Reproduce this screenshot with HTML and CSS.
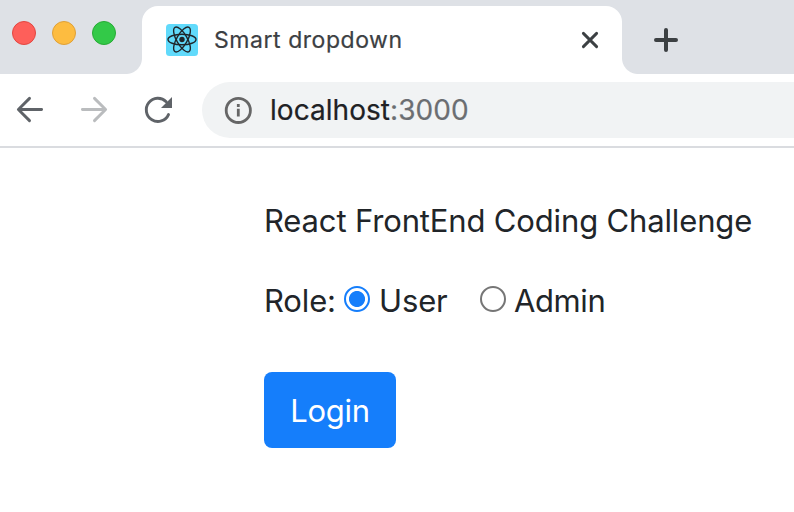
FILE: index.html
```html
<!DOCTYPE html>
<html lang="en">
<head>
<meta charset="utf-8">
<title>Smart dropdown</title>
<link rel="stylesheet" href="styles.css">
</head>
<body>
<header class="tab-strip">
  <div class="window-controls">
    <span class="dot close"></span><span class="dot minimize"></span><span class="dot maximize"></span>
  </div>
  <div class="tab">
    <svg class="favicon" viewBox="0 0 32 32">
      <rect width="32" height="32" rx="3.5" fill="#61dafb"/>
      <g fill="none" stroke="#20262b" stroke-width="1.4">
        <ellipse cx="16" cy="15.5" rx="14" ry="5.3"/>
        <ellipse cx="16" cy="15.5" rx="14" ry="5.3" transform="rotate(60 16 15.5)"/>
        <ellipse cx="16" cy="15.5" rx="14" ry="5.3" transform="rotate(120 16 15.5)"/>
      </g>
      <circle cx="16" cy="15.5" r="2.7" fill="#20262b"/>
    </svg>
    <span class="tab-title">Smart dropdown</span>
    <svg class="tab-close" viewBox="0 0 20 20"><path d="M3.4 3.4l13.2 13.2M16.6 3.4L3.4 16.6"/></svg>
  </div>
  <svg class="new-tab" viewBox="0 0 24 24"><path d="M2 12h20M12 2v20"/></svg>
</header>
<nav class="toolbar">
  <svg class="nav-icon back" viewBox="0 0 28 28"><path d="M25.6 13.5H2.6M13.5 2.4L2.4 13.5l11.1 11.1"/></svg>
  <svg class="nav-icon forward" viewBox="0 0 28 28"><path d="M2.4 13.5h23M14.5 2.4l11.1 11.1-11.1 11.1"/></svg>
  <svg class="nav-icon reload" viewBox="0 0 28 28"><path d="M24.5 18.6A11.6 11.6 0 1 1 22.2 5.8"/><path class="head" d="M28 1v11H17z"/></svg>
  <div class="address-bar">
    <svg class="info" viewBox="0 0 28 28"><circle cx="14.3" cy="14.4" r="12.1"/><path d="M14.3 12.7V20.6M14.3 8v3"/></svg>
    <span class="url"><span class="host">localhost</span><span class="port">:3000</span></span>
  </div>
</nav>
<main class="page">
  <p class="heading">React FrontEnd Coding Challenge</p>
  <form class="login-form">
    <div class="roles">
      <span class="role-label">Role:</span>
      <label class="role user"><input type="radio" name="role" checked><span class="user-text">User</span></label>
      <label class="role admin"><input type="radio" name="role"><span class="admin-text">Admin</span></label>
    </div>
    <button class="login" type="button"><span>Login</span></button>
  </form>
</main>
</body>
</html>
```
FILE: styles.css
```css
* { box-sizing: border-box; }
body {
  margin: 0;
  width: 794px;
  height: 512px;
  overflow: hidden;
  background: #fff;
  color: #212529;
  font-family: Inter, Roboto, sans-serif;
}
svg { display: block; flex: none; fill: none; overflow: visible; }
.tab-strip { display: flex; height: 74px; background: #dee1e6; }
.window-controls { display: flex; gap: 16px; width: 142px; padding: 21px 0 0 12px; }
.dot { width: 24px; height: 24px; border-radius: 50%; border: 1px solid; }
.close { background: #fe5f5a; border-color: #e24640; }
.minimize { background: #fdbc40; border-color: #dfa037; }
.maximize { background: #33c948; border-color: #27aa35; }
.tab {
  position: relative;
  display: flex;
  align-items: center;
  width: 480px;
  height: 68px;
  margin-top: 6px;
  padding: 0 22px 0 24px;
  background: #fff;
  border-radius: 16px 16px 0 0;
}
.tab::before, .tab::after {
  content: "";
  position: absolute;
  bottom: 0;
  width: 16px;
  height: 16px;
}
.tab::before { left: -16px; background: radial-gradient(circle at 0 0, transparent 15.5px, #fff 16.5px); }
.tab::after { right: -16px; background: radial-gradient(circle at 100% 0, transparent 15.5px, #fff 16.5px); }
.favicon { width: 32px; height: 32px; margin-right: 16px; }
.tab-title { color: #3c4043; font-size: 23px; letter-spacing: 0.55px; white-space: nowrap; -webkit-text-stroke: 0.2px; }
.tab-close { width: 20px; height: 20px; margin-left: auto; stroke: #3c4043; stroke-width: 2.9; stroke-linecap: round; }
.new-tab { width: 24px; height: 24px; margin: 28px 0 0 32px; stroke: #3c4043; stroke-width: 4; stroke-linecap: round; }
.toolbar { display: flex; align-items: center; height: 74px; padding-left: 16px; border-bottom: 2px solid #dadce0; }
.nav-icon { width: 28px; height: 28px; stroke-width: 2.9; stroke-linecap: round; stroke-linejoin: round; }
.back { stroke: #5f6368; }
.forward { stroke: #babcbe; margin-left: 36px; }
.reload { stroke: #5f6368; margin-left: 36px; }
.reload .head { fill: #5f6368; stroke: none; }
.address-bar {
  display: flex;
  flex: 1;
  align-items: center;
  height: 56px;
  margin-left: 30px;
  padding-left: 22px;
  background: #f1f3f4;
  border-radius: 28px 0 0 28px;
}
.info { width: 28px; height: 28px; margin-right: 18px; stroke: #666; stroke-width: 2.8; }
.url { font-size: 28px; letter-spacing: 0.05px; white-space: nowrap; -webkit-text-stroke: 0.2px; }
.host { color: #202124; }
.port { color: #6b6e72; }
.page { padding: 49px 0 0 264px; font-size: 31px; line-height: 48px; letter-spacing: -0.15px; }
.heading { margin: 0 0 32px; white-space: nowrap; }
.roles { display: flex; height: 48px; margin-bottom: 47px; white-space: nowrap; }
.role-label { width: 80px; }
.role { display: flex; }
.user { width: 136px; }
.role input {
  appearance: none;
  flex: none;
  width: 26px;
  height: 26px;
  margin: 9px 9px 0 0;
  border: 2px solid #767676;
  border-radius: 50%;
  background: #fff;
}
.admin input { margin-right: 8px; }
.admin-text { letter-spacing: -0.4px; }
.role input:checked { border-color: #157efb; background: radial-gradient(circle, #157efb 7.6px, #fff 8.4px); }
.login {
  display: block;
  width: 132px;
  height: 76px;
  padding: 2px 0 0;
  border: 0;
  border-radius: 8px;
  background: #157efb;
  color: #fff;
  font: inherit;
  letter-spacing: -0.3px;
}
```
